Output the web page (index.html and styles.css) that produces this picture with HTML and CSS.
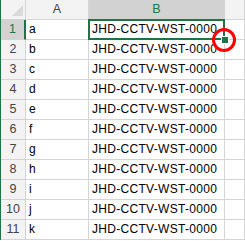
FILE: index.html
```html
<!DOCTYPE html>
<html lang="en">
<head>
  <meta charset="UTF-8" />
  <title>Sheet1</title>
  <link rel="stylesheet" href="styles.css">
</head>
<body>
  <div class="sheet">
    <div class="corner"><span class="select-all"></span></div>
    <div class="col-head">A</div>
    <div class="col-head active">B</div>
    <div class="col-head"></div>

    <div class="row-head active">1</div>
    <div class="cell">a</div>
    <div class="cell selected">JHD-CCTV-WST-0000<span class="fill-handle"></span><span class="mark"></span></div>
    <div class="cell"></div>

    <div class="row-head">2</div><div class="cell">b</div><div class="cell">JHD-CCTV-WST-0000</div><div class="cell"></div>
    <div class="row-head">3</div><div class="cell">c</div><div class="cell">JHD-CCTV-WST-0000</div><div class="cell"></div>
    <div class="row-head">4</div><div class="cell">d</div><div class="cell">JHD-CCTV-WST-0000</div><div class="cell"></div>
    <div class="row-head">5</div><div class="cell">e</div><div class="cell">JHD-CCTV-WST-0000</div><div class="cell"></div>
    <div class="row-head">6</div><div class="cell">f</div><div class="cell">JHD-CCTV-WST-0000</div><div class="cell"></div>
    <div class="row-head">7</div><div class="cell">g</div><div class="cell">JHD-CCTV-WST-0000</div><div class="cell"></div>
    <div class="row-head">8</div><div class="cell">h</div><div class="cell">JHD-CCTV-WST-0000</div><div class="cell"></div>
    <div class="row-head">9</div><div class="cell">i</div><div class="cell">JHD-CCTV-WST-0000</div><div class="cell"></div>
    <div class="row-head">10</div><div class="cell">j</div><div class="cell">JHD-CCTV-WST-0000</div><div class="cell"></div>
    <div class="row-head">11</div><div class="cell">k</div><div class="cell">JHD-CCTV-WST-0000</div><div class="cell"></div>
  </div>
</body>
</html>
```

FILE: styles.css
```css
body {
  margin: 0;
  background-color: white;
  font-family: 'Liberation Sans', Arial, sans-serif;
  font-size: 12px;
  overflow: hidden;
}

.sheet {
  display: grid;
  grid-template-columns: 25px 63px 136px 1fr;
  grid-auto-rows: 20px;
  border-left: 1px solid #217346;
}

.sheet > div {
  box-sizing: border-box;
  border-right: 1px solid #d4d4d4;
  border-bottom: 1px solid #d4d4d4;
}

.corner {
  position: relative;
  background-color: #f3f3f3;
}

.select-all {
  position: absolute;
  right: 2px;
  bottom: 3px;
  width: 11px;
  height: 11px;
  background-color: #dadada;
  clip-path: polygon(100% 0, 100% 100%, 0 100%);
}

.col-head,
.row-head {
  background-color: #f3f3f3;
  color: #444;
  text-align: center;
  line-height: 19px;
  font-size: 12.5px;
}

.col-head.active,
.row-head.active {
  background-color: #d2d2d2;
  color: #217346;
}

.row-head.active {
  border-right: 2px solid #217346;
}

.cell {
  padding-left: 3px;
  line-height: 19px;
  letter-spacing: 0.3px;
  color: #000;
  white-space: nowrap;
}

.selected {
  position: relative;
  z-index: 1;
}

.selected::after {
  content: '';
  position: absolute;
  top: -1px;
  left: -1px;
  right: -1px;
  bottom: -1px;
  border: 2px solid #217346;
}

.fill-handle {
  position: absolute;
  left: 132px;
  top: 16px;
  width: 8px;
  height: 8px;
  box-sizing: border-box;
  background-color: #217346;
  border: 1px solid white;
  z-index: 2;
}

/* red ring drawn over the fill handle */
.mark {
  position: absolute;
  left: 123px;
  top: 8px;
  width: 24px;
  height: 24px;
  box-sizing: border-box;
  border: 3px solid #ff0000;
  border-radius: 50%;
  z-index: 3;
}
```
